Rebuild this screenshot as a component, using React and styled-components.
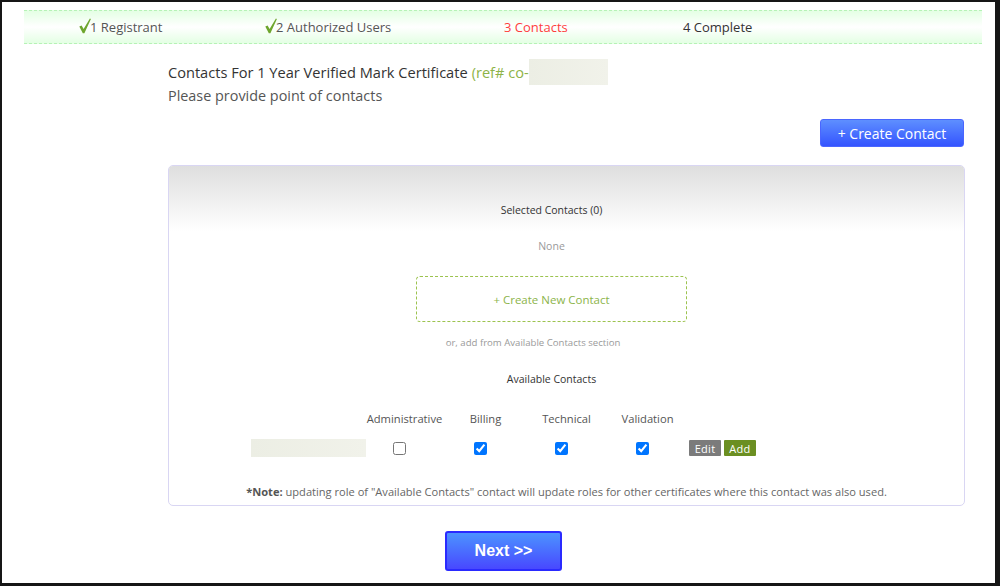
import React from "react";
import styled, { createGlobalStyle } from "styled-components";

const GlobalStyle = createGlobalStyle`
  html, body { margin: 0; padding: 0; background: #fff; }
  body { font-family: "Open Sans", "Noto Sans", sans-serif; color: #333; }
  * { box-sizing: border-box; }
`;

const Frame = styled.div`
  width: 1000px;
  height: 586px;
  border-style: solid;
  border-color: #161616;
  border-width: 2px 5px 3px 2px;
  overflow: hidden;
  background: #fff;
`;

const StepBar = styled.div`
  margin: 8px 0 0 22px;
  width: 958px;
  height: 34px;
  border-top: 1px dashed #b6f2b6;
  border-bottom: 1px dashed #b6f2b6;
  background: linear-gradient(to bottom, #e4ffe4 0%, #ffffff 50%, #e4ffe4 100%);
  display: grid;
  grid-template-columns: 186px 239px 179px auto;
  padding-left: 55px;
  align-items: center;
`;

const Step = styled.div`
  display: flex;
  align-items: center;
  font-size: 13px;
  color: ${(p) => (p.$active ? "#ff3d3d" : p.$done ? "#555" : "#333")};
  white-space: nowrap;
`;

const Check = styled.svg`
  width: 12px;
  height: 16px;
  margin-right: -1px;
  margin-top: -2px;
`;

const Content = styled.div`
  margin-left: 166px;
  width: 797px;
`;

const TitleRow = styled.div`
  margin-top: 15px;
  height: 26px;
  display: flex;
  align-items: center;
  font-size: 14.6px;
  color: #333;
  white-space: nowrap;
`;

const Ref = styled.span`
  color: #8db347;
  margin-left: 4px;
`;

const Redacted = styled.span`
  display: inline-block;
  width: ${(p) => p.$w}px;
  height: ${(p) => p.$h}px;
  background: linear-gradient(to right, #eceee4, #f1f2ea);
`;

const Subtitle = styled.div`
  margin-top: 2px;
  font-size: 14.4px;
  line-height: 18px;
  color: #555;
`;

const ActionRow = styled.div`
  margin-top: 14px;
  display: flex;
  justify-content: flex-end;
  padding-right: 1px;
`;

const BlueButton = styled.button`
  width: 144px;
  height: 28px;
  border: 1px solid #4a66ff;
  border-radius: 3px;
  background: linear-gradient(to bottom, #5e8fff, #3454ff);
  color: #fff;
  font-family: inherit;
  font-size: 14px;
  padding: 0;
  cursor: pointer;
`;

const Panel = styled.div`
  margin-top: 18px;
  height: 341px;
  border: 1px solid #d9d6f3;
  border-radius: 5px;
  overflow: hidden;
`;

const PanelHead = styled.div`
  height: 66px;
  padding-top: 36px;
  padding-right: 30px;
  background: linear-gradient(to bottom, #dedede 0%, #f4f4f4 65%, #ffffff 100%);
  text-align: center;
`;

const SectionTitle = styled.div`
  font-size: 10.5px;
  line-height: 16px;
  color: #333;
  text-align: center;
  padding-right: ${(p) => (p.$pad ? "30px" : "0")};
  margin-top: ${(p) => p.$mt || 0}px;
`;

const Muted = styled.div`
  font-size: ${(p) => p.$size || 10.5}px;
  line-height: ${(p) => p.$lh || 16}px;
  color: #9a9a9a;
  text-align: center;
  padding-right: ${(p) => p.$pr || 30}px;
  margin-top: ${(p) => p.$mt || 0}px;
`;

const DashedBox = styled.div`
  margin: 22px 0 0 247px;
  width: 271px;
  height: 46px;
  border: 1px dashed #9cc34f;
  border-radius: 4px;
  display: flex;
  align-items: center;
  justify-content: center;
  color: #8cb44a;
  font-size: 11.5px;
`;

const Grid = styled.div`
  display: grid;
  grid-template-columns: 113px repeat(4, 81px) auto;
  margin-left: 82px;
  align-items: center;
  margin-top: ${(p) => p.$mt}px;
  height: ${(p) => p.$h}px;
`;

const ColHead = styled.div`
  font-size: 11.2px;
  color: #555;
  text-align: center;
  white-space: nowrap;
`;

const Box = styled.input`
  justify-self: center;
  margin: 0 10px 0 0;
  width: 13px;
  height: 13px;
`;

const Buttons = styled.div`
  display: flex;
  gap: 3px;
  margin-left: 1px;
`;

const SmallButton = styled.button`
  height: 16px;
  width: 32px;
  border: none;
  border-radius: 1px;
  padding: 0;
  background: ${(p) => (p.$green ? "#6b8f22" : "#7b7b7b")};
  color: #fff;
  font-family: inherit;
  font-size: 11px;
  letter-spacing: 0.3px;
`;

const Note = styled.div`
  margin-top: 27px;
  font-size: 11.1px;
  line-height: 14px;
  color: #666;
  text-align: center;
  white-space: nowrap;
  b { color: #555; }
`;

const NextButton = styled.button`
  margin: 25px 0 0 443px;
  width: 117px;
  height: 40px;
  border: 2px solid #2a2aff;
  border-radius: 3px;
  background: linear-gradient(to bottom, #4c93ff, #4848ff);
  color: #fff;
  font-family: "Liberation Sans", Arial, sans-serif;
  font-weight: bold;
  font-size: 16px;
  padding: 0;
  cursor: pointer;
`;

const Tick = () => (
  <Check viewBox="0 0 12 16">
    <path d="M0.3 8.6 L2.6 7.4 L4.6 11 L10.9 0.4 L11.9 0.9 L5.4 15.2 L3.8 15.2 Z" fill="#6ea62e" />
  </Check>
);

const roles = [
  { label: "Administrative", checked: false },
  { label: "Billing", checked: true },
  { label: "Technical", checked: true },
  { label: "Validation", checked: true },
];

export default function App() {
  return (
    <>
      <GlobalStyle />
      <Frame>
        <StepBar>
          <Step $done><Tick />1 Registrant</Step>
          <Step $done><Tick />2 Authorized Users</Step>
          <Step $active>3 Contacts</Step>
          <Step>4 Complete</Step>
        </StepBar>
        <Content>
          <TitleRow>
            Contacts For 1 Year Verified Mark Certificate
            <Ref>(ref# co-</Ref>
            <Redacted $w={79} $h={26} />
          </TitleRow>
          <Subtitle>Please provide point of contacts</Subtitle>
          <ActionRow>
            <BlueButton>+ Create Contact</BlueButton>
          </ActionRow>
          <Panel>
            <PanelHead>
              <SectionTitle>Selected Contacts (0)</SectionTitle>
            </PanelHead>
            <Muted $mt={6}>None</Muted>
            <DashedBox>+ Create New Contact</DashedBox>
            <Muted $size={9.6} $lh={12} $mt={15} $pr={67}>or, add from Available Contacts section</Muted>
            <SectionTitle $pad $mt={22}>Available Contacts</SectionTitle>
            <Grid $mt={23} $h={16}>
              <span />
              {roles.map((r) => (
                <ColHead key={r.label}>{r.label}</ColHead>
              ))}
            </Grid>
            <Grid $mt={12} $h={20}>
              <Redacted $w={115} $h={18} />
              {roles.map((r) => (
                <Box key={r.label} type="checkbox" defaultChecked={r.checked} />
              ))}
              <Buttons>
                <SmallButton>Edit</SmallButton>
                <SmallButton $green>Add</SmallButton>
              </Buttons>
            </Grid>
            <Note>
              <b>*Note:</b> updating role of "Available Contacts" contact will update roles for other certificates where this contact was also used.
            </Note>
          </Panel>
        </Content>
        <NextButton>Next &gt;&gt;</NextButton>
      </Frame>
    </>
  );
}
